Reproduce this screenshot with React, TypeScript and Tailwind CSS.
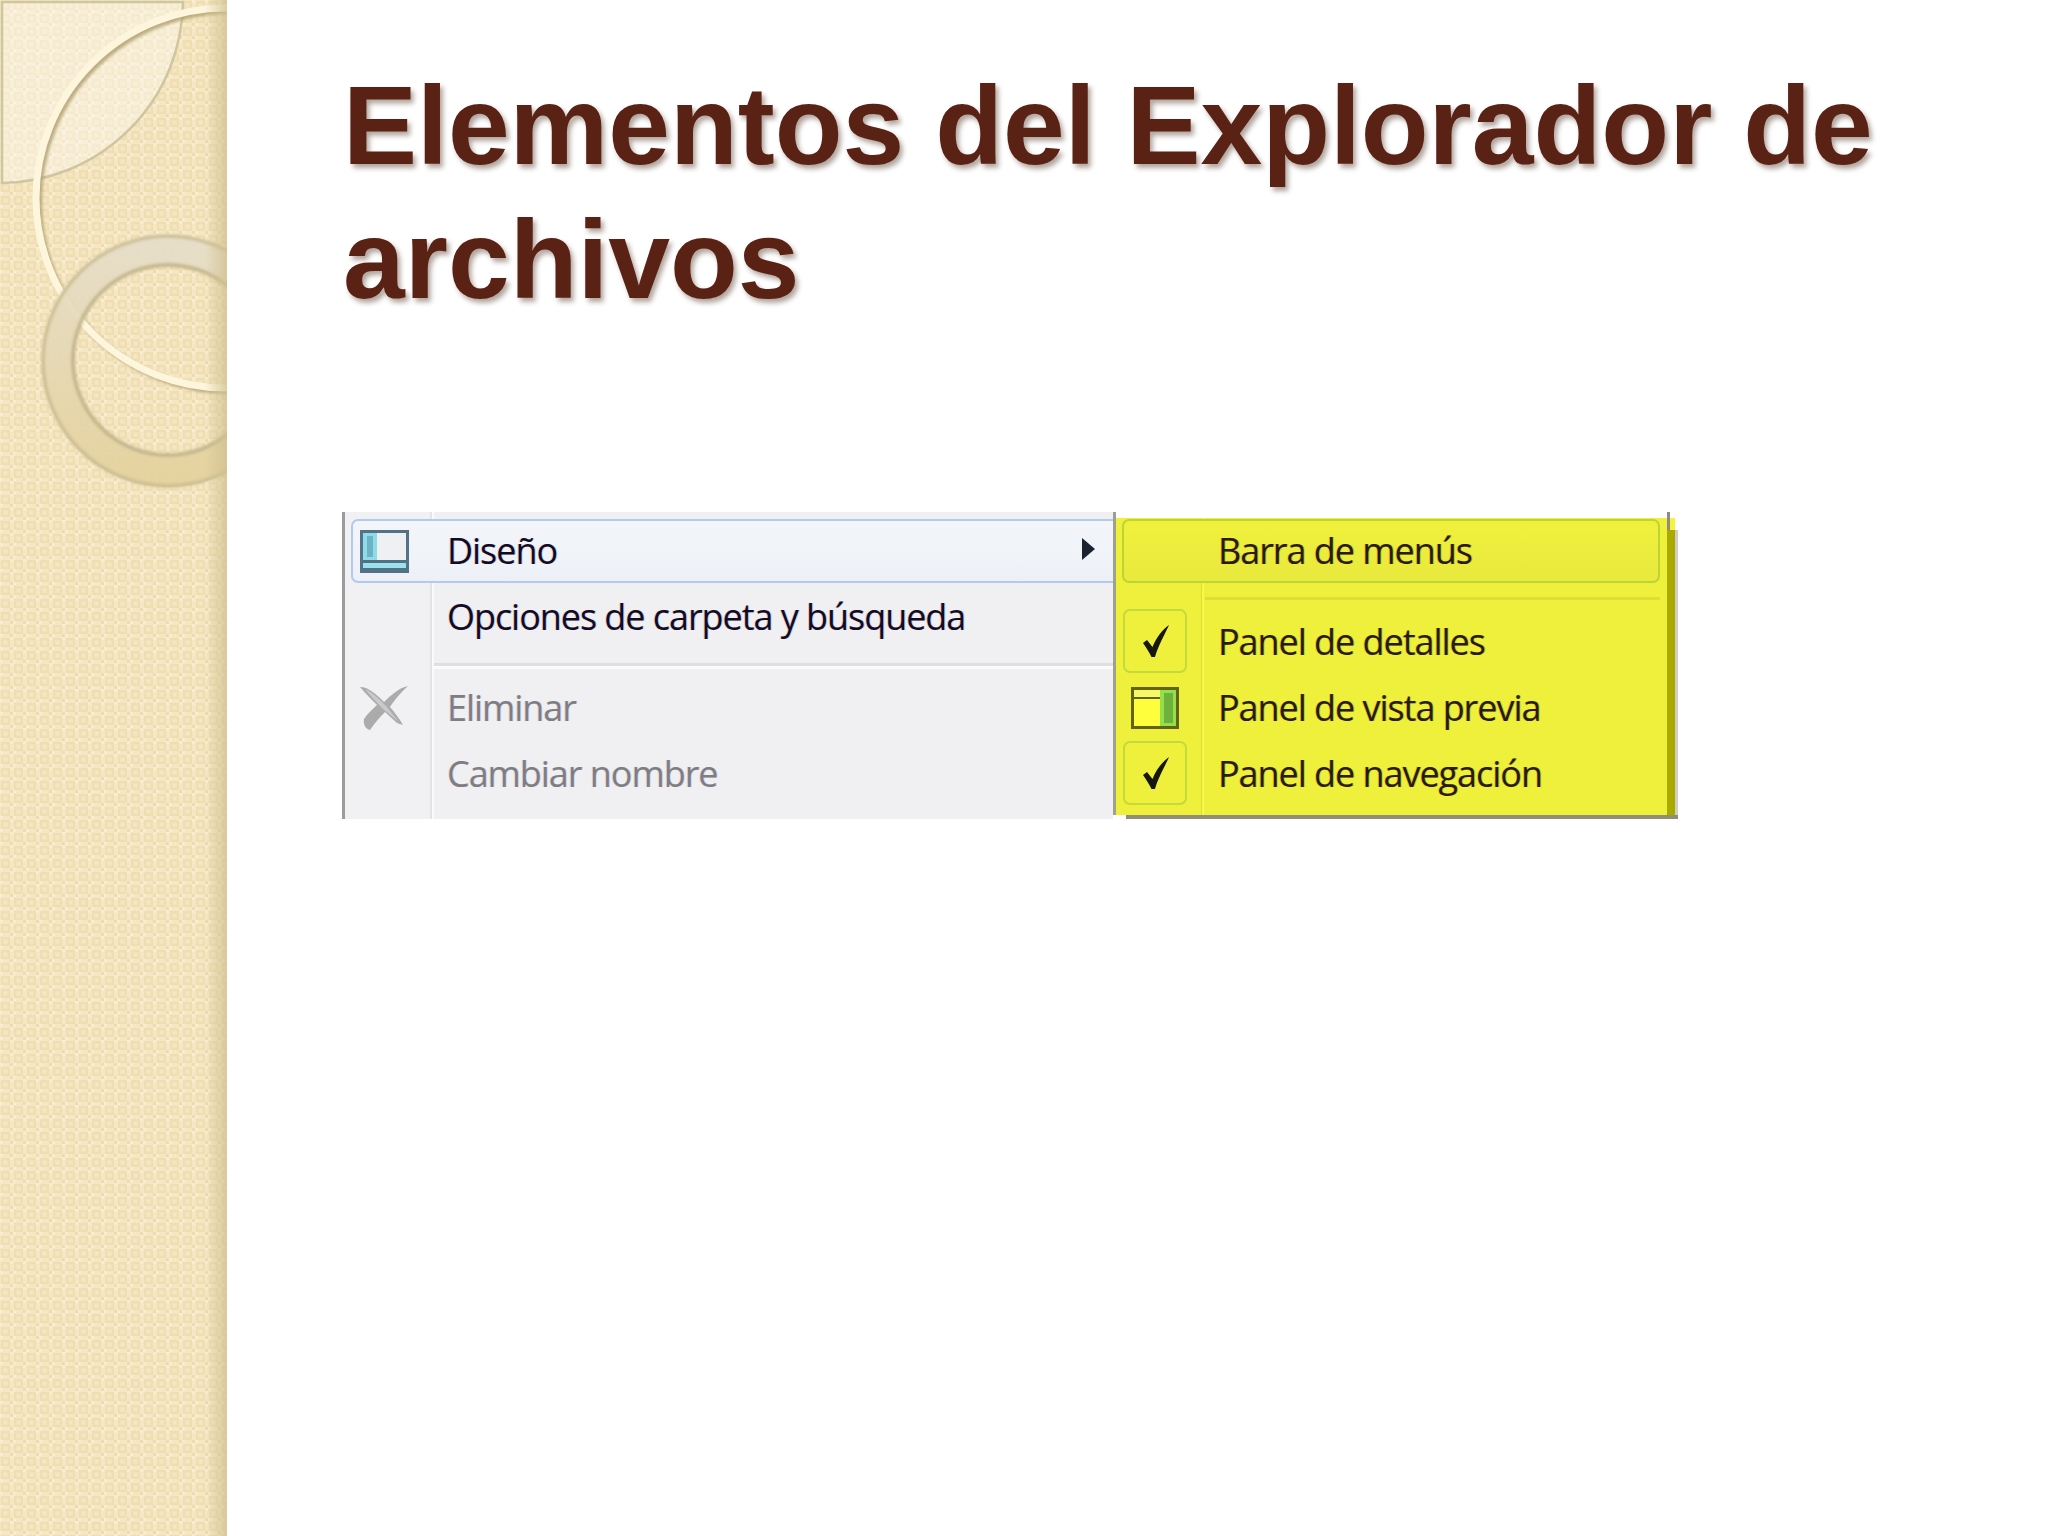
import type { ReactNode } from "react";

const MENU_FONT = "font-['Open_Sans',sans-serif]";

function SideArt() {
  return (
    <svg width="227" height="1536" viewBox="0 0 227 1536" className="block">
      <defs>
        <pattern id="weave" width="13" height="13" patternUnits="userSpaceOnUse">
          <rect width="13" height="13" fill="#f5e7c3" />
          <rect x="1" y="1" width="9" height="9" fill="#efdeb2" />
          <rect x="3" y="3" width="5" height="5" fill="#f3e3bb" />
          <rect x="4.5" y="4.5" width="2" height="2" fill="#f7ebce" />
          <rect x="10" y="0" width="3" height="3" fill="#f8edd0" />
          <rect x="0" y="10" width="3" height="3" fill="#f8edd0" />
          <rect x="10" y="10" width="3" height="3" fill="#eddcae" />
        </pattern>
        <linearGradient id="edge" x1="0" x2="1" y1="0" y2="0">
          <stop offset="0" stopColor="#cfc08f" stopOpacity="0" />
          <stop offset="1" stopColor="#cfc08f" stopOpacity="0.75" />
        </linearGradient>
        <linearGradient id="band" x1="0" x2="0" y1="0" y2="1">
          <stop offset="0" stopColor="#e6decb" />
          <stop offset="1" stopColor="#e4d19b" />
        </linearGradient>
        <filter id="soft" x="-20%" y="-20%" width="140%" height="140%">
          <feGaussianBlur stdDeviation="1.6" />
        </filter>
      </defs>
      <rect width="227" height="1536" fill="url(#weave)" />

      <path d="M2 2H183A183 183 0 0 1 2 183Z" fill="#fff" fillOpacity="0.36" stroke="#cfc59f" strokeWidth="2.5" />

      <circle cx="229" cy="201" r="190" fill="none" stroke="#ae9d6e" strokeWidth="6" filter="url(#soft)" opacity="0.8" />
      <circle cx="226" cy="198" r="190" fill="none" stroke="#fdf6dd" strokeWidth="7" />

      <path
        fillRule="evenodd"
        d="M168 235a126 126 0 1 0 .01 0ZM168 265a95 95 0 1 1-.01 0Z"
        fill="url(#band)"
        fillOpacity="0.92"
      />
      <circle cx="168" cy="361" r="125" fill="none" stroke="#c8bb91" strokeWidth="3" filter="url(#soft)" />
      <circle cx="168" cy="360" r="95" fill="none" stroke="#bfb288" strokeWidth="3.5" filter="url(#soft)" />

      <rect x="205" width="22" height="1536" fill="url(#edge)" />
    </svg>
  );
}

function PaneIcon() {
  return (
    <svg width="49" height="43" viewBox="0 0 49 43">
      <rect width="49" height="43" fill="#537288" />
      <rect x="3" y="3" width="43" height="37" fill="#eff0f3" />
      <rect x="3" y="3" width="14" height="27" fill="#8fdce8" />
      <rect x="7" y="6" width="6" height="21" fill="#6cb3c6" />
      <rect x="3" y="30" width="43" height="10" fill="#527185" />
      <rect x="3" y="33" width="43" height="5" fill="#9be3ec" />
    </svg>
  );
}

function DeleteIcon() {
  return (
    <svg width="50" height="46" viewBox="0 0 50 46">
      <path d="M1 2C10 2 18 10 25 17C32 10 40 3 49 1C42 7 35 16 31 22C36 28 40 33 44 40L38 38L26 27C20 33 15 39 11 45C7 44 4 40 5 34C9 28 14 24 18 20C12 14 6 8 1 2Z" fill="#ababab" />
      <path d="M6 4C13 7 20 14 27 21L40 37L24 24C17 17 11 10 6 4Z" fill="#c9c9c9" />
    </svg>
  );
}

function CheckIcon() {
  return (
    <svg width="28" height="34" viewBox="0 0 28 34" className="ml-[2px]">
      <path d="M1 19L5 16L10.5 23C14 14 20 6 27 1C23 10 16 22 13 33H9.5C7 28 4 23 1 19Z" fill="#16160a" />
    </svg>
  );
}

function PreviewIcon() {
  return (
    <svg width="48" height="42" viewBox="0 0 48 42">
      <rect width="48" height="42" fill="#636314" />
      <rect x="3" y="3" width="26" height="7" fill="#f7f76a" />
      <rect x="3" y="12" width="26" height="27" fill="#fefe3c" />
      <rect x="29" y="3" width="16" height="36" fill="#94df4e" />
      <rect x="33" y="6" width="9" height="30" fill="#6fb13d" />
    </svg>
  );
}

function Row({ icon, label, muted, hot, yellow }: { icon?: ReactNode; label: string; muted?: boolean; hot?: boolean; yellow?: boolean }) {
  const shell = hot
    ? yellow
      ? "ml-[6px] mr-[7px] h-[64px] rounded-[7px] border-2 border-[#bdd437] bg-[linear-gradient(#f0f03c,#e9e93e)]"
      : "ml-[6px] h-[64px] rounded-l-[7px] border-y-2 border-l-2 border-[#b2caee] bg-[linear-gradient(#f3f5f9,#edf1f7)]"
    : "ml-[6px] h-[64px] border-2 border-transparent";
  return (
    <div className={`flex items-center ${shell}`}>
      <div className="flex h-full w-[62px] shrink-0 items-center justify-center">{icon}</div>
      <span
        className={`ml-[32px] text-[36px] leading-none tracking-[-1.05px] ${MENU_FONT} ${
          muted
            ? "text-[#7f7d84] [text-shadow:-1px_0_0_rgba(200,130,70,0.18),1px_0_0_rgba(70,130,220,0.18)]"
            : yellow
              ? "text-[#2a1a06] [text-shadow:-1px_0_0_rgba(170,90,20,0.22),1px_0_0_rgba(40,120,60,0.25)]"
              : "text-[#140a24] [text-shadow:-1px_0_0_rgba(200,110,30,0.22),1px_0_0_rgba(40,130,220,0.25)]"
        }`}
      >
        {label}
      </span>
    </div>
  );
}

function CheckBox() {
  return (
    <div className="-mt-[2px] flex h-[64px] w-[64px] shrink-0 items-center justify-center rounded-[7px] border-2 border-[#c4da3c]">
      <CheckIcon />
    </div>
  );
}

export default function App() {
  return (
    <div className="flex h-[1536px] w-[2048px] overflow-hidden bg-white">
      <aside className="h-[1536px] w-[227px] shrink-0">
        <SideArt />
      </aside>

      <main className="flex-1 pl-[115px] pt-[59px]">
        <h1 className="ml-[1px] w-[1620px] font-['Liberation_Sans',Arial,sans-serif] text-[111px] font-bold leading-[134px] text-[#5a2214] [text-shadow:3px_4px_5px_rgba(60,30,10,0.4)]">
          Elementos del Explorador de archivos
        </h1>

        <div className="mt-[185px] flex h-[307px] items-start">
          {/* main context menu */}
          <div className="h-[307px] w-[771px] shrink-0 border-l-[3px] border-[#9c9c9c] bg-[linear-gradient(90deg,#f1f1f3_85px,#e4e4e6_85px,#e4e4e6_87px,#fafafa_87px,#fafafa_89px,#f0f0f2_89px)] pt-[7px]">
            <Row hot icon={<PaneIcon />} label="Diseño" />
            <div className="relative">
              {/* arrow of the open submenu */}
              <svg width="13" height="22" viewBox="0 0 13 22" className="absolute -top-[45px] right-[18px]">
                <path d="M0 0L13 11L0 22Z" fill="#1b2230" />
              </svg>
            </div>
            <div className="mt-[2px]">
              <Row label="Opciones de carpeta y búsqueda" />
            </div>
            <div className="ml-[89px] mt-[14px] h-[6px] border-t-[3px] border-[#dfdfe1] bg-[#fbfbfb]" />
            <div className="mt-[7px]">
              <Row muted icon={<DeleteIcon />} label="Eliminar" />
            </div>
            <div className="mt-[2px]">
              <Row muted label="Cambiar nombre" />
            </div>
          </div>

          {/* yellow submenu */}
          <div className="relative mt-[6px] flex shrink-0 flex-col">
            <div className="flex">
              <div className="h-[297px] w-[554px] border-l-[3px] border-[#a0a090] bg-[linear-gradient(90deg,#eff03c_85px,#dcdc35_85px,#dcdc35_86px,#f8f848_86px,#f8f848_88px,#eff03c_88px)] pt-px">
                <Row hot yellow label="Barra de menús" />
                <div className="ml-[89px] mr-[7px] mt-[14px] h-[3px] bg-[#dede3a]" />
                <div className="mt-[10px]">
                  <Row yellow icon={<CheckBox />} label="Panel de detalles" />
                </div>
                <div className="mt-[2px]">
                  <Row yellow icon={<PreviewIcon />} label="Panel de vista previa" />
                </div>
                <div className="mt-[2px]">
                  <Row yellow icon={<CheckBox />} label="Panel de navegación" />
                </div>
              </div>
              <div className="w-[8px]">
                <div className="h-[12px] bg-[#f4f43c]" />
                <div className="h-[285px] bg-[#a9a900]" />
              </div>
              <div className="mt-[12px] h-[285px] w-[3px] bg-[#cfcfc8]" />
            </div>
            <div className="ml-[13px] h-[4px] w-[552px] bg-[#8f8f78]" />
            <div className="absolute -top-[6px] left-0 h-[6px] w-[3px] bg-[#9c9c9c]" />
            <div className="absolute -top-[6px] left-[554px] h-[18px] w-[3px] bg-[#8c8c80]" />
          </div>
        </div>
      </main>
    </div>
  );
}
